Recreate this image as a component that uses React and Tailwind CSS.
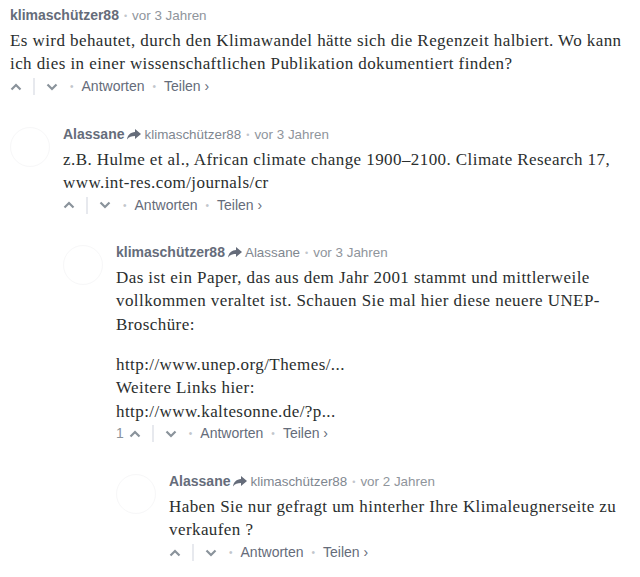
import React from "react";

const Arrow = () => (
  <svg width="14" height="11" viewBox="0 0 14 11" className="inline-block mx-[3px] -mt-[2px]">
    <path d="M8 0 L14 5 L8 10 L8 7 C4.5 7 2 7.8 0 10.5 C0.6 6 3.5 3.3 8 3 Z" fill="#656c7a" />
  </svg>
);

const Up = () => (
  <svg width="12" height="8" viewBox="0 0 12 8" className="block">
    <path d="M1.5 6.5 L6 2 L10.5 6.5" fill="none" stroke="#8a939b" strokeWidth="2.2" />
  </svg>
);
const Down = () => (
  <svg width="12" height="8" viewBox="0 0 12 8" className="block">
    <path d="M1.5 1.5 L6 6 L10.5 1.5" fill="none" stroke="#8a939b" strokeWidth="2.2" />
  </svg>
);

function Header({ author, to, time }) {
  return (
    <div className="h-[18px] leading-[18px] text-[13.4px] whitespace-nowrap" style={{ fontFamily: '"Liberation Sans", Arial, sans-serif' }}>
      <span className="font-bold text-[#656c7a] text-[14px]">{author}</span>
      {to && (
        <>
          <Arrow />
          <span className="text-[#7f8790]">{to}</span>
        </>
      )}
      <span className="text-[#c2c6cc] text-[9px] mx-[5px] relative -top-[1px]">•</span>
      <span className="text-[#8f959c]">{time}</span>
    </div>
  );
}

function Actions({ votes }) {
  return (
    <div className="h-[18px] mt-[2px] flex items-center text-[14px] text-[#656c7a]" style={{ fontFamily: '"Liberation Sans", Arial, sans-serif' }}>
      {votes && <span className="text-[#8a939b] mr-[5px]">{votes}</span>}
      <Up />
      <span className="w-[2px] h-[17px] bg-[#e7e9ee] mx-[11px]" />
      <Down />
      <span className="text-[#c2c6cc] text-[10px] ml-[12px] mr-[8px]">•</span>
      <span>Antworten</span>
      <span className="text-[#c2c6cc] text-[10px] mx-[8px]">•</span>
      <span>Teilen ›</span>
    </div>
  );
}

function Body({ children }) {
  return (
    <div className="mt-[5px] text-[17px] leading-[23.3px] text-[#2a2e2e] tracking-[0.42px]" style={{ fontFamily: '"Liberation Serif", Georgia, serif' }}>
      {children}
    </div>
  );
}

function Avatar() {
  return <div className="w-[40px] h-[40px] rounded-full border border-[#f7f7f8] shrink-0 mt-[2px]" />;
}

function Comment({ author, to, time, votes, body, children }) {
  return (
    <div className="flex-1 min-w-0">
      <Header author={author} to={to} time={time} />
      <Body>{body}</Body>
      <Actions votes={votes} />
      {children && (
        <div className="mt-[29px] flex gap-[13px]">
          <Avatar />
          {children}
        </div>
      )}
    </div>
  );
}

export default function App() {
  return (
    <div className="w-[640px] h-[577px] bg-white pl-[10px] pt-[6px] overflow-hidden">
      <Comment
        author="klimaschützer88"
        time="vor 3 Jahren"
        body={
          <p>
            Es wird behautet, durch den Klimawandel hätte sich die Regenzeit halbiert. Wo kann
            <br />
            ich dies in einer wissenschaftlichen Publikation dokumentiert finden?
          </p>
        }
      >
        <Comment
          author="Alassane"
          to="klimaschützer88"
          time="vor 3 Jahren"
          body={
            <p>
              z.B. Hulme et al., African climate change 1900–2100. Climate Research 17,
              <br />
              www.int-res.com/journals/cr
            </p>
          }
        >
          <Comment
            author="klimaschützer88"
            to="Alassane"
            time="vor 3 Jahren"
            votes="1"
            body={
              <>
                <p className="mb-[17px]">
                  Das ist ein Paper, das aus dem Jahr 2001 stammt und mittlerweile
                  <br />
                  vollkommen veraltet ist. Schauen Sie mal hier diese neuere UNEP-
                  <br />
                  Broschüre:
                </p>
                <p>
                  http://www.unep.org/Themes/...
                  <br />
                  Weitere Links hier:
                  <br />
                  http://www.kaltesonne.de/?p...
                </p>
              </>
            }
          >
            <Comment
              author="Alassane"
              to="klimaschützer88"
              time="vor 2 Jahren"
              body={
                <p>
                  Haben Sie nur gefragt um hinterher Ihre Klimaleugnerseite zu
                  <br />
                  verkaufen ?
                </p>
              }
            />
          </Comment>
        </Comment>
      </Comment>
    </div>
  );
}
